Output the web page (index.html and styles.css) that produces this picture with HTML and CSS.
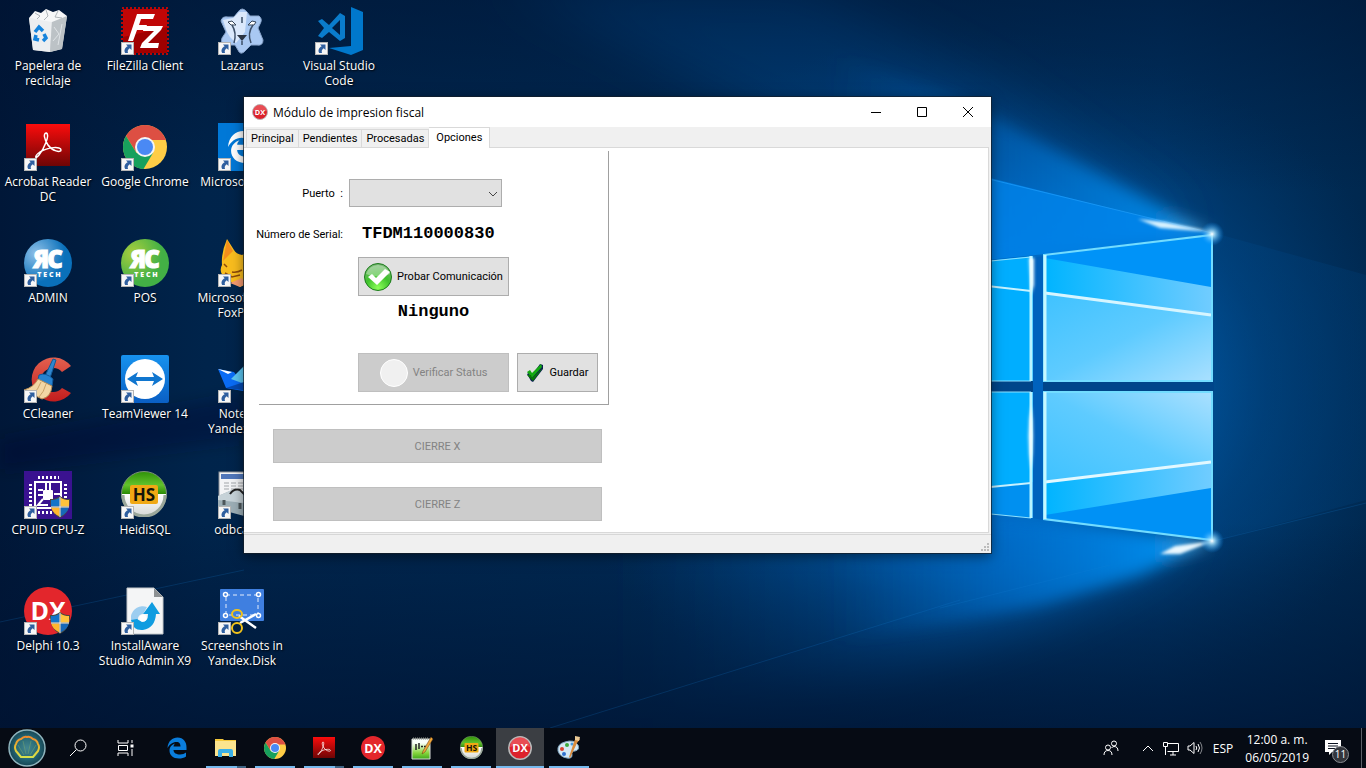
FILE: index.html
```html
<!DOCTYPE html>
<html lang="es">
<head>
<meta charset="utf-8">
<title>Módulo de impresion fiscal</title>
<link rel="stylesheet" href="styles.css">
</head>
<body>
<svg class="defs" width="0" height="0" aria-hidden="true">
  <defs>
    <linearGradient id="acro" x1="0" y1="0" x2="0" y2="1"><stop offset="0" stop-color="#fb0c0c"/><stop offset="1" stop-color="#6e0505"/></linearGradient>
    <radialGradient id="greenball" cx=".5" cy=".9" r=".9"><stop offset="0" stop-color="#8dff5a"/><stop offset=".5" stop-color="#3fc22c"/><stop offset="1" stop-color="#7ab677"/></radialGradient>
    <linearGradient id="heidi" x1="0" y1="0" x2="0" y2="1"><stop offset="0" stop-color="#2f9208"/><stop offset=".3" stop-color="#62c12c"/><stop offset=".5" stop-color="#2b8a06"/><stop offset=".5" stop-color="#fff"/><stop offset="1" stop-color="#d4d6d4"/></linearGradient>
    <radialGradient id="rcblue" cx=".25" cy=".3" r=".6"><stop offset="0" stop-color="#8fc1e8"/><stop offset="1" stop-color="#0a70ba"/></radialGradient>
    <radialGradient id="rcgreen" cx=".25" cy=".3" r=".6"><stop offset="0" stop-color="#a9cf3e"/><stop offset="1" stop-color="#43b045"/></radialGradient>
    <linearGradient id="tv" x1="0" y1="0" x2="0" y2="1"><stop offset="0" stop-color="#1792ee"/><stop offset="1" stop-color="#0a5fc4"/></linearGradient>
    <linearGradient id="cc" x1="0" y1="0" x2="0" y2="1"><stop offset="0" stop-color="#e2604f"/><stop offset="1" stop-color="#c21d1d"/></linearGradient>
    <radialGradient id="orb"><stop offset="0" stop-color="#5aa0ac"/><stop offset=".6" stop-color="#256877"/><stop offset="1" stop-color="#174654"/></radialGradient>
    <linearGradient id="shell" x1="0" y1="0" x2="0" y2="1"><stop offset="0" stop-color="#f08a2c"/><stop offset=".6" stop-color="#e8c533"/><stop offset="1" stop-color="#d6e04a"/></linearGradient>
    <linearGradient id="npp" x1="0" y1="0" x2="0" y2="1"><stop offset=".2" stop-color="#fafffa"/><stop offset=".7" stop-color="#86d63c"/><stop offset="1" stop-color="#3fa81c"/></linearGradient>
    <symbol id="arrow" viewBox="0 0 13 13">
      <rect x=".5" y=".5" width="12" height="12" fill="#f7f7f7" stroke="#b5b5b5"/>
      <path d="M5 2.500H10.500V8L8.700 6.200C7 7.300 6.300 8.700 7 11H4.200C2.600 8.200 4 5.700 6.700 4.200Z" fill="#2f5f9f"/>
    </symbol>
    <symbol id="shield" viewBox="0 0 22 22">
      <path d="M11 0C8 2.500 4.500 3 1 3C1 11 3 18 11 22C19 18 21 11 21 3C17.500 3 14 2.500 11 0Z" fill="#4a4a40"/>
      <path d="M10.500 1.500C8 3.500 5 4 2 4V10.500H10.500Z" fill="#1274c8"/><path d="M11.500 1.500C14 3.500 17 4 20 4V10.500H11.500Z" fill="#ffc33c"/>
      <path d="M2.200 11.500H10.500V20.500C5.500 18 3 15 2.200 11.500Z" fill="#ffb62e"/><path d="M19.800 11.500H11.500V20.500C16.500 18 19 15 19.800 11.500Z" fill="#1668b8"/>
      <path d="M11 1V21M2 11H20" stroke="#f2f4f6"/>
    </symbol>
    <symbol id="chrome" viewBox="0 0 44 44">
      <circle cx="22" cy="22" r="22" fill="#ffcd46"/>
      <path d="M3 11A22 22 0 0 1 41 11L43 15H22L13 27Z" fill="#dd4f43"/>
      <path d="M3 11A22 22 0 0 0 20.500 44L30 28L13.500 28Z" fill="#17a05d"/>
      <circle cx="22" cy="22" r="10" fill="#f5f5f5"/><circle cx="22" cy="22" r="8" fill="#4a89f4"/>
    </symbol>
    <symbol id="acrobat" viewBox="0 0 44 42">
      <rect width="44" height="42" fill="url(#acro)"/>
      <path d="M20.500 10C17 10 18 16 22 22C26 28 35 30 35 27C35 23 22 24 14 30C8 34 9 38 13 33C18 27 24 12 20.500 10Z" fill="none" stroke="#fff" stroke-width="1.500"/>
    </symbol>
    <symbol id="heidisql" viewBox="0 0 46 46">
      <circle cx="23" cy="23" r="22.500" fill="url(#heidi)" stroke="#7d917a"/>
      <path d="M2 24A21 21 0 0 0 44 24" fill="none" stroke="#9aa69a" stroke-width="3"/>
      <rect x="9" y="14" width="28" height="19" rx="2" fill="#f0a814"/>
      <text x="23" y="30" class="glyph glyph-hs">HS</text>
    </symbol>
    <symbol id="edge" viewBox="0 0 40 42">
      <path d="M1 21C2 7 11 0 21 0C33 0 39 9 39 20V25H13C13 31 19 34 26 34C31 34 35 32 38 30V38C34 41 29 42 24 42C12 42 5 35 5 26C5 19 10 14 16 12C14 14 13 16 13 18H27C27 13 25 9 19 9C11 9 5 14 1 21Z"/>
    </symbol>
    <symbol id="dx" viewBox="0 0 48 48">
      <circle cx="24" cy="24" r="24" fill="#e3262c"/><text x="24" y="33" class="glyph glyph-dx">DX</text>
    </symbol>
    <symbol id="dxring" viewBox="0 0 48 48">
      <circle cx="24" cy="24" r="22.500" fill="#dc222c" stroke="#b9b9b9" stroke-width="3"/><path d="M4 22A20 20 0 0 1 44 22Q24 14 4 22Z" fill="#f06a70" fill-opacity=".6"/><text x="24" y="32" class="glyph glyph-dxs">DX</text>
    </symbol>
  </defs>
</svg>

<main class="desktop">
  <svg class="wallpaper" viewBox="0 0 1366 768" preserveAspectRatio="xMidYMin slice" aria-hidden="true">
    <defs>
      <linearGradient id="base" x1="0" x2="1" y1="0" y2="0"><stop offset="0" stop-color="#001738"/><stop offset=".15" stop-color="#00244b"/><stop offset=".5" stop-color="#002a54"/><stop offset=".85" stop-color="#003363"/><stop offset="1" stop-color="#00284f"/></linearGradient>
      <radialGradient id="halo" gradientUnits="userSpaceOnUse" cx="980" cy="385" r="440" gradientTransform="translate(0 75) scale(1 .8)"><stop offset="0" stop-color="#0086ee"/><stop offset=".35" stop-color="#0074d6" stop-opacity=".85"/><stop offset=".65" stop-color="#004a8c" stop-opacity=".5"/><stop offset="1" stop-color="#003a70" stop-opacity="0"/></radialGradient>
      <linearGradient id="vignette" x1="0" x2="0" y1="0" y2="1"><stop offset="0" stop-color="#001230" stop-opacity=".5"/><stop offset=".25" stop-color="#001230" stop-opacity="0"/><stop offset=".68" stop-color="#001230" stop-opacity="0"/><stop offset=".95" stop-color="#001230" stop-opacity=".7"/></linearGradient>
      <linearGradient id="beam" gradientUnits="userSpaceOnUse" x1="830" x2="1212" y1="0" y2="0"><stop offset="0" stop-color="#0060b8" stop-opacity="0"/><stop offset=".5" stop-color="#0078dc" stop-opacity=".7"/><stop offset=".85" stop-color="#0098ff"/><stop offset="1" stop-color="#7bd4ff"/></linearGradient>
      <linearGradient id="pane" x1="0" x2="1" y1="0" y2="1"><stop offset="0" stop-color="#3fc2ff"/><stop offset=".5" stop-color="#5ecbff"/><stop offset="1" stop-color="#a9e0ff"/></linearGradient>
      <linearGradient id="pane2" x1="0" x2="1" y1="1" y2="0"><stop offset="0" stop-color="#3fc2ff"/><stop offset=".5" stop-color="#5ecbff"/><stop offset="1" stop-color="#a9e0ff"/></linearGradient>
      <linearGradient id="band" x1="0" x2="1" y1="0" y2="0"><stop offset="0" stop-color="#00b4ff"/><stop offset="1" stop-color="#70ccff"/></linearGradient>
      <linearGradient id="side" gradientUnits="userSpaceOnUse" x1="1212" x2="1366" y1="0" y2="0"><stop offset="0" stop-color="#004a8c" stop-opacity=".3"/><stop offset="1" stop-color="#00427e" stop-opacity=".25"/></linearGradient>
      <linearGradient id="low" gradientUnits="userSpaceOnUse" x1="620" x2="1000" y1="0" y2="0"><stop offset="0" stop-color="#0058a8" stop-opacity="0"/><stop offset="1" stop-color="#0078dc" stop-opacity=".6"/></linearGradient>
      <radialGradient id="spark"><stop offset="0" stop-color="#fff"/><stop offset=".25" stop-color="#a8e4ff" stop-opacity=".8"/><stop offset="1" stop-color="#0090ff" stop-opacity="0"/></radialGradient>
      <filter id="b1" x="-50%" y="-50%" width="200%" height="200%"><feGaussianBlur stdDeviation="1.500"/></filter>
      <filter id="b4" x="-20%" y="-50%" width="140%" height="200%"><feGaussianBlur stdDeviation="8"/></filter>
      <filter id="b20" x="-30%" y="-50%" width="160%" height="200%"><feGaussianBlur stdDeviation="26"/></filter>
    </defs>
    <rect width="1366" height="768" fill="url(#base)"/>
    <rect width="1366" height="768" fill="url(#halo)"/>
    <path d="M1190 225L990 80L800 -20H500L850 160L990 260Z" fill="#0066c0" fill-opacity=".35" filter="url(#b20)"/>
    <path d="M1190 540L1060 610L900 670L600 730V500Z" fill="url(#low)" filter="url(#b20)"/>
    <path d="M1214 233L1366 275V500L1214 541Z" fill="url(#side)"/>
    <rect width="1366" height="768" fill="url(#vignette)"/>
    <path d="M0 440L244 395V440L0 470Z" fill="#00102a" fill-opacity=".3" filter="url(#b4)"/>
    <path d="M1213 235L1120 185L960 100L800 40V260L1040 255Z" fill="url(#beam)" fill-opacity=".7" filter="url(#b4)"/>
    <path d="M1213 234L800 130V280L1045 254Z" fill="#0086ee" fill-opacity=".75"/>
    <path d="M1212 233L960 172" stroke="#25a3ff" stroke-opacity=".6" fill="none"/>
    <path d="M1213 232L1165 222L1138 219L1160 228Z" fill="#d9f3ff" filter="url(#b1)"/>
    <path d="M1213 541L1140 575L1040 605L800 650V500L1045 520Z" fill="url(#beam)" fill-opacity=".8" filter="url(#b4)"/>
    <path d="M1213 541L1175 546L1160 554L1180 554Z" fill="#e9f8ff" filter="url(#b1)"/>
    <path d="M0 622L244 570M550 728L960 600M940 608L1110 565M1214 541L1366 503" stroke="#1583d8" stroke-opacity=".2" fill="none"/>
    <path d="M900 380H1214V392H900Z" fill="#00458a"/>
    <path d="M1033 258L1043 256V520L1033 518Z" fill="#0062bd"/>
    <path d="M900 270L1033 256V381H900ZM900 392H1033V518L900 505Z" fill="#00aeff"/>
    <path d="M900 495L1033 482V518L900 505Z" fill="#0090f0"/>
    <path d="M900 276L1031 291M900 496L1031 483" stroke="#c6f2ff" stroke-width="2"/>
    <path d="M900 270L1031 257V381H900M900 392H1031V518L900 505" fill="none" stroke="#8fe2ff"/>
    <path d="M1031 256V381M1031 392V518" stroke="#b9f3ff" stroke-width="3"/>
    <path d="M1029 258H1034V285L1031 295ZM1031 405Q1026 435 1031 470Q1035 435 1031 405Z" fill="#f4fdff" filter="url(#b1)"/>
    <path d="M1045 255L1211 235V381H1045Z" fill="#0093f8"/>
    <path d="M1045 258L1211 287V381H1045Z" fill="url(#band)"/>
    <path d="M1045 293L1211 315V381H1045Z" fill="url(#pane)"/>
    <path d="M1045 293L1211 315" stroke="#d6f5ff" stroke-width="3"/>
    <path d="M1044 255L1212 235V381H1044Z" fill="none" stroke="#72dcff" stroke-width="2"/>
    <path d="M1045 255V381" stroke="#c6f7ff" stroke-width="3"/>
    <path d="M1045 392H1211V540L1045 520Z" fill="#0091f5"/>
    <path d="M1045 392H1211V488L1045 515Z" fill="url(#band)"/>
    <path d="M1045 392H1211V462L1045 482Z" fill="url(#pane2)"/>
    <path d="M1045 482L1211 462" stroke="#e2f8ff" stroke-width="3"/>
    <path d="M1044 392H1212V540L1044 519Z" fill="none" stroke="#72dcff" stroke-width="2"/>
    <path d="M1045 392V519" stroke="#c6f7ff" stroke-width="3"/>
    <circle cx="1212" cy="234" r="12" fill="url(#spark)"/><circle cx="1212" cy="541" r="12" fill="url(#spark)"/>
  </svg>

  <ul class="icons">
    <li class="shortcut"><svg viewBox="0 0 48 48" class="icon">
      <path d="M5 11L43 9L38 42L26 45L9 43Z" fill="#d3d7da"/><path d="M5 11L28 14L26 45L9 43Z" fill="#eceef0"/><path d="M28 14L43 9L38 42L26 45Z" fill="#bcc2c6"/>
      <path d="M5 11L11 4L17 6L22 2L29 5L35 3L43 9L28 15Z" fill="#f6f7f8"/><path d="M11 6L16 9L13 12M22 3L24 9L20 13M34 4L31 10L38 11" stroke="#b0b6ba" fill="none"/>
      <path d="M30 20L35 27L29 34M38 17L34 38" stroke="#dfe3e6" fill="none"/>
      <path d="M11 25L15 20L19 24M20 27L22 31L19 34M15 33L11 32L12 28" fill="none" stroke="#1583dc" stroke-width="3.500"/></svg>
      <span class="label">Papelera de reciclaje</span></li>
    <li class="shortcut"><svg viewBox="0 0 48 48" class="icon">
      <rect x="2" y="1" width="44" height="42" fill="url(#acro)"/>
      <path d="M22.500 10C19 10 20 16 24 22C28 28 37 30 37 27C37 23 24 24 16 29C10 33 11 37 15 32C20 26 26 12 22.500 10Z" fill="none" stroke="#fff" stroke-width="1.500"/>
      <use href="#arrow" y="35" width="13" height="13"/></svg>
      <span class="label">Acrobat Reader DC</span></li>
    <li class="shortcut"><svg viewBox="0 0 48 48" class="icon">
      <circle cx="24" cy="24" r="24" fill="url(#rcblue)"/><text x="16" y="29" class="glyph glyph-rc" transform="translate(33 0) scale(-1 1)">R</text><text x="31" y="29" class="glyph glyph-rc">C</text><text x="25" y="38" class="glyph glyph-tech">T E C H</text>
      <use href="#arrow" y="35" width="13" height="13"/></svg>
      <span class="label">ADMIN</span></li>
    <li class="shortcut"><svg viewBox="0 0 48 48" class="icon">
      <path d="M47 11L38 17A12 12 0 1 0 38 33L47 38A22 22 0 1 1 47 11Z" fill="url(#cc)"/>
      <path d="M29 4L32 5L26 23L21 21Z" fill="#2f86cf" stroke="#125a98"/><path d="M15 20Q22 17 29 24L28 31L14 25Z" fill="#2782cf" stroke="#0f599c"/>
      <path d="M14 24L28 31Q27 42 18 44L0 35Q10 32 14 24Z" fill="#f2d6a4" stroke="#b98e55"/><path d="M17 27Q14 35 9 39M22 29Q20 37 15 42" stroke="#c9a268" fill="none"/>
      <use href="#arrow" y="35" width="13" height="13"/></svg>
      <span class="label">CCleaner</span></li>
    <li class="shortcut"><svg viewBox="0 0 48 48" class="icon">
      <rect width="48" height="48" fill="#3a1290"/><g fill="none" stroke="#fff" stroke-width="2"><path d="M11 11H37V37H11Z"/><path d="M14 6.500H35M14 41.500H35" stroke-width="3" stroke-dasharray="2 2"/><path d="M6.500 13V36M41.500 13V36" stroke-width="3" stroke-dasharray="2 2"/><path d="M22 12V19M26 12V19M14 19H19M14 24H19M19 28L14 34H24M30 23H36"/></g>
      <rect x="19" y="19" width="10" height="10" rx="1" fill="#fff"/>
      <use href="#shield" x="25" y="25" width="22" height="22"/><use href="#arrow" y="35" width="13" height="13"/></svg>
      <span class="label">CPUID CPU-Z</span></li>
    <li class="shortcut"><svg viewBox="0 0 48 48" class="icon">
      <use href="#dx" width="48" height="48"/><use href="#shield" x="25" y="25" width="22" height="22"/><use href="#arrow" y="35" width="13" height="13"/></svg>
      <span class="label">Delphi 10.3</span></li>

    <li class="shortcut"><svg viewBox="0 0 48 48" class="icon">
      <rect x="2" y="2" width="44" height="44" fill="#a00000"/><rect x="1" y="1" width="46" height="46" fill="none" stroke="#b80808" stroke-width="2" stroke-dasharray="2"/><path d="M2 2H46V20L2 30Z" fill="#bf0606"/>
      <path d="M16 7H34L32 12H20L18 18H26L24 23H16L12 34H7Z" fill="#fff"/><path d="M23 19H42L40 23L27 36H38L37 41H19L21 36L33 24H22Z" fill="#fff"/>
      <use href="#arrow" y="35" width="13" height="13"/></svg>
      <span class="label">FileZilla Client</span></li>
    <li class="shortcut"><svg viewBox="0 0 48 48" class="icon">
      <use href="#chrome" x="2" y="2" width="44" height="44"/><use href="#arrow" y="35" width="13" height="13"/></svg>
      <span class="label">Google Chrome</span></li>
    <li class="shortcut"><svg viewBox="0 0 48 48" class="icon">
      <circle cx="24" cy="24" r="24" fill="url(#rcgreen)"/><text x="16" y="29" class="glyph glyph-rc" transform="translate(33 0) scale(-1 1)">R</text><text x="31" y="29" class="glyph glyph-rc">C</text><text x="25" y="38" class="glyph glyph-tech">T E C H</text>
      <use href="#arrow" y="35" width="13" height="13"/></svg>
      <span class="label">POS</span></li>
    <li class="shortcut"><svg viewBox="0 0 48 48" class="icon">
      <rect width="48" height="48" rx="2" fill="url(#tv)"/><circle cx="24" cy="24" r="20" fill="#fff"/><path d="M6 24L17 17L15 22H33L31 17L42 24L31 31L33 26H15L17 31Z" fill="#1076cf"/>
      <use href="#arrow" y="35" width="13" height="13"/></svg>
      <span class="label">TeamViewer 14</span></li>
    <li class="shortcut"><svg viewBox="0 0 48 48" class="icon">
      <use href="#heidisql" width="46" height="46"/><use href="#arrow" y="35" width="13" height="13"/></svg>
      <span class="label">HeidiSQL</span></li>
    <li class="shortcut"><svg viewBox="0 0 48 48" class="icon">
      <path d="M6 1H33L42 10V47H6Z" fill="#f4f5f6" stroke="#c4c8cb"/><path d="M33 1V10H42Z" fill="#8d9193"/>
      <path d="M10 29A12 12 0 0 1 26 20L22 27A5 5 0 0 0 17 33H10Z" fill="#9ccdf0"/><path d="M10 33Q12 44 22 43Q34 41 35 27H39L31 15L22 27H27Q27 35 21 35L16 32Z" fill="#109ce0"/><circle cx="22" cy="31" r="3.500" fill="#fff"/>
      <use href="#arrow" y="35" width="13" height="13"/></svg>
      <span class="label">InstallAware Studio Admin X9</span></li>

    <li class="shortcut"><svg viewBox="0 0 48 48" class="icon">
      <path d="M20 5Q24-1 29 5L32 9L41 9Q45 12 42 17L40 21L45 33Q45 39 39 38L33 38L26 45Q22 48 20 43L17 38L8 38Q2 37 4 31L8 25L3 14Q4 9 10 10L16 10Z" fill="#a9c8f2" stroke="#8aa5cb"/>
      <path d="M21 5L29 5L27 25L18 36L12 30L9 25L5 13L15 11Z" fill="#dbe8fb"/><path d="M19 28H29L24 34Z" fill="#2b3443"/>
      <path d="M10 15L14 14L18 18L13 18ZM38 15L34 14L30 18L36 18Z" fill="#fff" stroke="#354458"/><path d="M14 18Q19 26 16 36M35 18Q29 26 33 36M24 34V38M24 10V16" stroke="#3d4f68" fill="none" stroke-width="1.500"/>
      <use href="#arrow" y="35" width="13" height="13"/></svg>
      <span class="label">Lazarus</span></li>
    <li class="shortcut"><svg viewBox="0 0 48 48" class="icon">
      <rect width="48" height="48" fill="#0078d7"/><use href="#edge" x="9" y="8" width="31" height="32" fill="#fff"/><use href="#arrow" y="35" width="13" height="13"/></svg>
      <span class="label">Microsoft Edge</span></li>
    <li class="shortcut"><svg viewBox="0 0 48 48" class="icon">
      <path d="M9 0L16 11Q18 15 24 16L40 8L38 26Q38 42 22 48L8 40Q0 33 4 26Q3 14 9 0Z" fill="#f9bd1e"/><path d="M9 1L15 12L5 22Z" fill="#f58f1c"/><path d="M6 25L9 28M14 33Q19 34 24 31M7 34L14 38L22 36" stroke="#8b4a0a" stroke-width="1.500" fill="none"/><path d="M12 44L24 39L27 45L22 48Z" fill="#f59a70"/>
      <use href="#arrow" y="35" width="13" height="13"/></svg>
      <span class="label">Microsoft Visual FoxPro 9</span></li>
    <li class="shortcut"><svg viewBox="0 0 48 48" class="icon">
      <path d="M0 14L16 17L24 28L48 40L8 33Z" fill="#0a6cf5"/><path d="M0 14L14 17L10 19Z" fill="#fff"/><path d="M13 24L26 11L42 32L24 28Z" fill="#5cc6f2"/><path d="M8 33L26 27L48 38Z" fill="#0549b0"/>
      <use href="#arrow" y="35" width="13" height="13"/></svg>
      <span class="label">Notes in Yandex.Disk</span></li>
    <li class="shortcut"><svg viewBox="0 0 48 48" class="icon">
      <rect x="1" y="1" width="44" height="30" fill="#f3f4f6" stroke="#8b9097"/><path d="M3 3H44V8H3Z" fill="#4f76ba"/><path d="M6 12H40M6 15H40M6 18H40" stroke="#a2a6aa" stroke-dasharray="5 2"/>
      <path d="M0 25L14 19L46 24V41L30 46L0 38Z" fill="#9caeb6"/><path d="M0 25L14 19L46 24V29L26 32L0 29Z" fill="#c6d2d8"/><path d="M12 23Q16 17 22 19L28 25" fill="none" stroke="#222" stroke-width="2"/><path d="M6 29V34M22 32V38" stroke="#4c565b" stroke-width="3"/>
      <use href="#arrow" y="35" width="13" height="13"/></svg>
      <span class="label">odbcad32</span></li>
    <li class="shortcut"><svg viewBox="0 0 48 48" class="icon">
      <rect x="2" y="2" width="44" height="32" rx="1" fill="#3f7fe0"/><path d="M8 8H40V28H8Z" fill="none" stroke="#e4edfb" stroke-dasharray="4 3"/><g fill="#3f7fe0" stroke="#fff" stroke-width="1.500"><circle cx="7.500" cy="7.500" r="2"/><circle cx="40.500" cy="7.500" r="2"/><circle cx="7.500" cy="28.500" r="2"/><circle cx="40.500" cy="28.500" r="2"/></g>
      <path d="M21 29L38 41M22 36L38 27" stroke="#fff" stroke-width="2.500"/><g fill="none" stroke="#f2c31b" stroke-width="2"><ellipse cx="19" cy="27" rx="5" ry="4"/><ellipse cx="19" cy="41" rx="5" ry="5"/></g>
      <use href="#arrow" y="35" width="13" height="13"/></svg>
      <span class="label">Screenshots in Yandex.Disk</span></li>

    <li class="shortcut"><svg viewBox="0 0 48 48" class="icon">
      <path d="M36 0L48 5V43L36 48L14 41L36 39Z" fill="#0078cc"/><path d="M25 6L30 9V31L25 34L14 25L7 31L3 29L9 21L3 14L7 12L14 18ZM25 13L17 21L25 28Z" fill="#0a7ccb" fill-rule="evenodd"/>
      <use href="#arrow" y="35" width="13" height="13"/></svg>
      <span class="label">Visual Studio Code</span></li>
  </ul>

  <section class="window" aria-labelledby="window-title">
    <header class="titlebar">
      <svg class="app-icon" viewBox="0 0 48 48"><use href="#dxring" width="48" height="48"/></svg>
      <h1 id="window-title">Módulo de impresion fiscal</h1>
      <button class="caption" aria-label="Minimizar"><svg viewBox="0 0 12 12"><path d="M1 6.500H11" /></svg></button>
      <button class="caption" aria-label="Maximizar"><svg viewBox="0 0 12 12"><path d="M1.500 1.500H10.500V10.500H1.500Z"/></svg></button>
      <button class="caption" aria-label="Cerrar"><svg viewBox="0 0 12 12"><path d="M1 1L11 11M11 1L1 11"/></svg></button>
    </header>
    <nav class="tabs" role="tablist">
      <button class="tab" role="tab">Principal</button>
      <button class="tab" role="tab">Pendientes</button>
      <button class="tab" role="tab">Procesadas</button>
      <button class="tab active" role="tab" aria-selected="true">Opciones</button>
    </nav>
    <div class="page">
      <form class="group">
        <label class="field-label" for="puerto">Puerto &nbsp;:</label>
        <div class="combo"><select id="puerto"><option></option></select><svg viewBox="0 0 10 6"><path d="M1 1L5 5L9 1"/></svg></div>
        <label class="field-label" for="serial">Número de Serial:</label>
        <output class="mono serial" id="serial">TFDM110000830</output>
        <button type="button" class="btn probe"><svg viewBox="0 0 28 28"><circle cx="14" cy="14" r="13.500" fill="url(#greenball)" stroke="#1d7a1d"/><path d="M2 11A12.500 12.500 0 0 1 26 11Q14 16 2 11Z" fill="#fff" fill-opacity=".35"/><path d="M4 14L8 11L12 15L21 6L26 9L13 22Z" fill="#fff"/></svg>Probar Comunicación</button>
        <output class="mono state">Ninguno</output>
        <button type="button" class="btn verify" disabled><svg viewBox="0 0 28 28"><circle cx="14" cy="14" r="13.500" fill="#f0f0f0" stroke="#fff"/></svg>Verificar Status</button>
        <button type="button" class="btn save"><svg class="small" viewBox="0 0 18 20"><path d="M1 11L4 9L6 12L14 1L17 2L17 6L7 19L5 18Z" fill="#0b1c55"/><path d="M1 9L4 7L6 10L15 1L16 4L6 15Z" fill="#13a813"/><path d="M1 12L5 12L6 15L17 5L7 18Z" fill="#087808"/></svg>Guardar</button>
      </form>
      <div class="closings">
        <button class="btn wide" disabled>CIERRE X</button>
        <button class="btn wide" disabled>CIERRE Z</button>
      </div>
    </div>
    <footer class="statusbar"><svg viewBox="0 0 9 9"><path d="M6 0H8V2H6ZM3 3H5V5H3ZM6 3H8V5H6ZM0 6H2V8H0ZM3 6H5V8H3ZM6 6H8V8H6Z"/></svg></footer>
  </section>
</main>

<footer class="taskbar">
  <button class="start" aria-label="Inicio"><svg viewBox="0 0 38 38"><circle cx="19" cy="19" r="18" fill="url(#orb)" stroke="#8fb4bd" stroke-width="1.500"/><path d="M13 28L8 22Q6 18 8 15Q9 11 13 10Q16 7 19 8Q22 7 25 10Q29 11 30 15Q32 18 30 22L25 28Z" fill="#2b6c74" fill-opacity=".5" stroke="url(#shell)" stroke-width="2" stroke-linejoin="round"/><path d="M16 26L10 16M18 25L15 12M20 25L23 12M22 26L28 16" stroke="#8ab46a" stroke-opacity=".4"/></svg></button>
  <button class="task" aria-label="Buscar"><svg viewBox="0 0 24 24" class="line"><circle cx="14.500" cy="9.500" r="5.500"/><path d="M10.500 13.500L4 20"/></svg></button>
  <button class="task" aria-label="Vista de tareas"><svg viewBox="0 0 24 24" class="line"><path d="M4 4V7H14V4M4.500 9.500H13.500V14.500H4.500ZM4 20V17H14V20M18 4V7M18 13V20"/><path d="M16.500 8.500H19.500V11.500H16.500Z" fill="#fff" stroke="none"/></svg></button>
  <button class="task first" aria-label="Edge"><svg viewBox="0 0 24 24"><use href="#edge" x="2" y="1" width="20" height="22" fill="#0a7ddc"/></svg></button>
  <button class="task open stacked" aria-label="Explorador"><svg viewBox="0 0 24 24"><path d="M1 3H9L10 4H22V20H1Z" fill="#f5c83a"/><path d="M1 5H22V20H1Z" fill="#fbe48e"/><path d="M4 21V15Q4 13 6 13H17Q19 13 19 15V21H15V17H8V21Z" fill="#3ab0e8"/></svg></button>
  <button class="task open" aria-label="Chrome"><svg viewBox="0 0 24 24"><use href="#chrome" x="1" y="1" width="22" height="22"/></svg></button>
  <button class="task open stacked" aria-label="Acrobat"><svg viewBox="0 0 24 24"><use href="#acrobat" x="1" y="1" width="22" height="21"/></svg></button>
  <button class="task open" aria-label="Delphi"><svg viewBox="0 0 24 24"><use href="#dx" width="24" height="24"/></svg></button>
  <button class="task open" aria-label="Notepad++"><svg viewBox="0 0 24 24"><path d="M2 3H20V23H2Z" fill="url(#npp)" stroke="#d7dcd7"/><path d="M3 2.500H19" stroke="#8a8f8a" stroke-width="2" stroke-dasharray="1"/><path d="M6 8V14M9 7V13M11 10.500H13M14 10.500H16" stroke="#222" stroke-width="1.500"/><path d="M21 1L23 3L15 16L12 18L13 15Z" fill="#f0a63a" stroke="#5e3b12" stroke-width=".5"/></svg></button>
  <button class="task open" aria-label="HeidiSQL"><svg viewBox="0 0 24 24"><use href="#heidisql" x="1" width="23" height="23"/></svg></button>
  <button class="task open active" aria-label="Módulo de impresion fiscal"><svg viewBox="0 0 24 24"><use href="#dxring" width="24" height="24"/></svg></button>
  <button class="task open" aria-label="Paint"><svg viewBox="0 0 24 24"><path d="M1 15Q0 8 8 6Q17 3 21 9Q23 14 18 15Q14 15 15 19Q15 23 10 22Q3 21 1 15Z" fill="#d5e8f4" stroke="#7fa6c2"/><circle cx="5" cy="13" r="2" fill="#d8412f"/><circle cx="10" cy="9" r="2" fill="#3bab3d"/><circle cx="15" cy="8" r="1.500" fill="#4a9be0"/><circle cx="7" cy="18" r="2" fill="#2f71cf"/><path d="M19 1L23 3L20 7L13 22L12 21L17 6Z" fill="#d98b3c"/><path d="M18 0L23 1L22 5L18 4Z" fill="#eac995"/></svg></button>

  <div class="tray">
    <svg viewBox="0 0 18 18" class="line people"><circle cx="6" cy="8.500" r="2.500"/><path d="M2 16Q2 11.500 6 11.500Q10 11.500 10 16"/><circle cx="12" cy="4.500" r="2.500"/><path d="M9.500 9Q10.500 7.500 12 7.500Q16 7.500 16 12"/></svg>
    <svg viewBox="0 0 12 12" class="line chevron"><path d="M1 9L6 4L11 9"/></svg>
    <svg viewBox="0 0 18 18" class="line"><path d="M5.500 4.500H16.500V12.500H5.500M11 13V16M8 16H14M3.500 7V16M1.500 3.500H5.500V7.500H1.500Z"/></svg>
    <svg viewBox="0 0 18 18" class="line"><path d="M2 7H4L8 3.500V14.500L4 11H2ZM10 7Q11.500 9 10 11M12 5Q15 9 12 13"/><path d="M14 3Q18 9 14 15" stroke-opacity=".5"/></svg>
    <span class="lang">ESP</span>
    <time class="clock" datetime="2019-05-06T00:00"><span>12:00 a. m.</span><span>06/05/2019</span></time>
    <button class="notices" aria-label="Notificaciones"><svg viewBox="0 0 18 18"><path d="M1 1H17V13H8L5 16V13H1Z" fill="#fff"/><path d="M4 4.500H14M4 7H14M4 9.500H11" stroke="#0b1220"/></svg><span class="badge">11</span></button>
  </div>
</footer>
</body>
</html>
```
FILE: styles.css
```css
* { box-sizing: border-box; }

body {
  margin: 0;
  min-height: 100vh;
  display: flex;
  flex-direction: column;
  background: #001230;
  font: 12px/15px "Open Sans", "Noto Sans", sans-serif;
}

button {
  margin: 0;
  padding: 0;
  border: 0;
  background: none;
  font: inherit;
  color: inherit;
}

svg { display: block; flex: none; }
.defs { position: absolute; }

.glyph { text-anchor: middle; fill: #fff; font-family: "Open Sans", sans-serif; font-weight: 700; }
.glyph-hs { font-size: 17px; fill: #14140a; }
.glyph-dx { font-size: 25px; }
.glyph-dxs { font-size: 22px; }
.glyph-rc { font-size: 24px; font-weight: 800; stroke: #fff; stroke-width: 1px; }
.glyph-tech { font-size: 7px; font-weight: 800; }

/* Desktop */
.desktop { position: relative; flex: 1; overflow: hidden; }
.wallpaper { position: absolute; top: 0; left: 0; width: 100%; height: 100vh; }

.icons {
  position: relative;
  display: grid;
  grid-template-rows: repeat(6, 116px);
  grid-auto-flow: column;
  grid-auto-columns: 96px;
  column-gap: 1px;
  margin: 0;
  padding: 7px 0 0;
  list-style: none;
}
.shortcut { display: flex; flex-direction: column; align-items: center; gap: 3px; min-width: 0; }
.icon { width: 48px; height: 48px; }
.label {
  max-width: 94px;
  color: #fff;
  text-align: center;
  text-shadow: 1px 1px 2px #000;
}

/* Application window */
.window {
  position: absolute;
  left: 244px;
  top: 97px;
  width: 747px;
  display: flex;
  flex-direction: column;
  background: #f0f0f0;
  box-shadow: 0 0 0 1px rgba(20, 30, 40, .7), 0 3px 12px rgba(0, 0, 0, .5);
  color: #000;
  font-family: Roboto, sans-serif;
  font-size: 11px;
}
.titlebar { display: flex; align-items: center; height: 30px; padding-left: 8px; background: #fff; }
.titlebar h1 { flex: 1; margin: 0 0 0 5px; font: 400 12px/15px "Open Sans", sans-serif; }
.app-icon { width: 16px; height: 16px; }
.caption { display: grid; place-items: center; width: 46px; height: 30px; }
.caption svg { width: 12px; height: 12px; fill: none; stroke: #000; }

.tabs { display: flex; align-items: flex-end; height: 20px; padding-left: 2px; }
.tab {
  height: 18px;
  padding: 0 4px;
  border: 1px solid #d9d9d9;
  border-width: 1px 1px 0 0;
}
.tab:first-child { border-left-width: 1px; }
.tab.active {
  position: relative;
  height: 21px;
  padding: 0 7px 2px;
  margin-bottom: -1px;
  background: #fff;
}
.page {
  display: flex;
  flex-direction: column;
  margin: 0 2px 1px 0;
  padding: 3px 0 11px 15px;
  border: 1px solid #d9d9d9;
  border-left: 0;
  background: #fff;
}
.group {
  display: grid;
  grid-template-columns: 90px 9px 151px 89px;
  grid-template-rows: 28px 54px 35px 31px 26px 39px;
  align-items: center;
  width: 350px;
  height: 254px;
  padding-top: 28px;
  border: 1px solid #a0a0a0;
  border-width: 0 1px 1px 0;
}
.field-label { grid-column: 1; justify-self: end; padding-right: 6px; white-space: nowrap; }
.combo { grid-column: 2 / 4; position: relative; width: 153px; }
.combo select { appearance: none; display: block; width: 100%; height: 28px; border: 1px solid #adadad; border-radius: 0; background: #e1e1e1; }
.combo svg { position: absolute; right: 4px; top: 12px; width: 10px; height: 6px; fill: none; stroke: #444; pointer-events: none; }
.mono { grid-column: 3 / 5; font: 700 17px/20px "Liberation Mono", monospace; }
.serial { padding-left: 4px; }
.state { grid-column: 3; text-align: center; }

.btn {
  display: flex;
  align-items: center;
  justify-content: center;
  gap: 5px;
  height: 39px;
  border: 1px solid #adadad;
  background: #e1e1e1;
  white-space: nowrap;
}
.btn:disabled { border-color: #bfbfbf; background: #ccc; color: #838383; }
.btn svg { width: 28px; height: 28px; }
.btn svg.small { width: 18px; height: 20px; }
.probe { grid-column: 3; align-self: end; }
.verify { grid-column: 3; grid-row: 6; }
.save { grid-column: 4; grid-row: 6; margin-left: 8px; }

.closings { display: flex; flex-direction: column; gap: 24px; width: 329px; margin: 24px 0 0 14px; }
.wide { height: 34px; }

.statusbar { display: flex; justify-content: flex-end; align-items: flex-end; height: 19px; padding: 1px; border-top: 1px solid #d7d7d7; }
.statusbar svg { width: 9px; height: 9px; fill: #bcbcbc; }

/* Taskbar */
.taskbar { position: relative; display: flex; height: 40px; background: #060b14; color: #fff; }
.start { display: grid; place-items: center; width: 54px; }
.start svg { width: 38px; height: 38px; }
.task { display: grid; place-items: center; width: 48px; position: relative; }
.task.first { margin-left: 3px; }
.task.open { margin-left: 1px; }
.task svg { width: 24px; height: 24px; }
.line { fill: none; stroke: #fff; }
.open::after { content: ""; position: absolute; left: 4px; right: 4px; bottom: 0; height: 2px; background: #76b9ed; }
.stacked::after { background: linear-gradient(90deg, #76b9ed 31px, #3f6484 31px); }
.active.task { background: #3b3e43; }
.active.task::after { left: 0; right: 0; }

.tray { display: flex; align-items: center; gap: 6px; margin-left: auto; margin-right: 4px; padding-right: 9px; border-right: 1px solid #5c6068; }
.tray svg { width: 18px; height: 18px; }
.tray .chevron { width: 12px; height: 12px; margin-right: 2px; }
.people { margin-right: 16px; }
.lang { margin-left: 3px; }
.clock { display: flex; flex-direction: column; gap: 3px; margin-left: 6px; text-align: center; }
.notices { position: relative; width: 28px; height: 40px; display: flex; align-items: center; margin-left: 9px; }
.badge {
  position: absolute;
  left: 8px;
  top: 18px;
  width: 17px;
  height: 17px;
  border: 1px solid #8a8d92;
  border-radius: 50%;
  background: #33363c;
  font-size: 10px;
}
```
